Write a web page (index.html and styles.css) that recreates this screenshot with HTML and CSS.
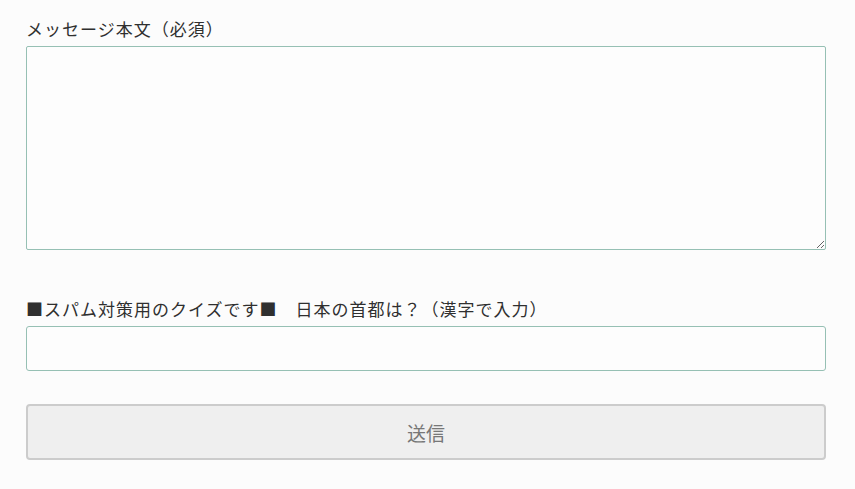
FILE: index.html
```html
<!DOCTYPE html>
<html lang="ja">
<head>
<meta charset="utf-8">
<link rel="stylesheet" href="styles.css">
</head>
<body>
<form class="form">
  <label class="label" for="msg">メッセージ本文（必須）</label>
  <textarea id="msg" class="textarea"></textarea>
  <label class="label label-quiz" for="quiz">■スパム対策用のクイズです■　日本の首都は？（漢字で入力）</label>
  <input id="quiz" class="input" type="text">
  <button class="submit" type="button">送信</button>
</form>
</body>
</html>
```
FILE: styles.css
```css
html, body {
  margin: 0;
  padding: 0;
  background: #fcfcfc;
}
body {
  font-family: "Noto Sans CJK JP", "Noto Sans", sans-serif;
  color: #333;
}
.form {
  display: flex;
  flex-direction: column;
  width: 800px;
  padding: 16px 0 0 26px;
}
.label {
  font-size: 17px;
  letter-spacing: 1px;
  line-height: 26px;
  height: 26px;
  margin-bottom: 4px;
  color: #2f2f2f;
}
.label-quiz {
  margin-top: 46px;
}
.textarea {
  box-sizing: border-box;
  height: 204px;
  width: 800px;
  border: 1px solid #96c0b4;
  border-radius: 2px;
  background: #fdfdfd;
  margin: 0;
  resize: vertical;
  font-family: inherit;
}
.input {
  box-sizing: border-box;
  height: 45px;
  width: 800px;
  border: 1px solid #96c0b4;
  border-radius: 3px;
  background: #fdfdfd;
  margin: 0;
  font-family: inherit;
}
.submit {
  box-sizing: border-box;
  margin-top: 33px;
  height: 56px;
  width: 800px;
  background: #efefef;
  border: 2px solid #cccccc;
  border-radius: 4px;
  color: #777;
  font-family: inherit;
  font-size: 19px;
}
```
